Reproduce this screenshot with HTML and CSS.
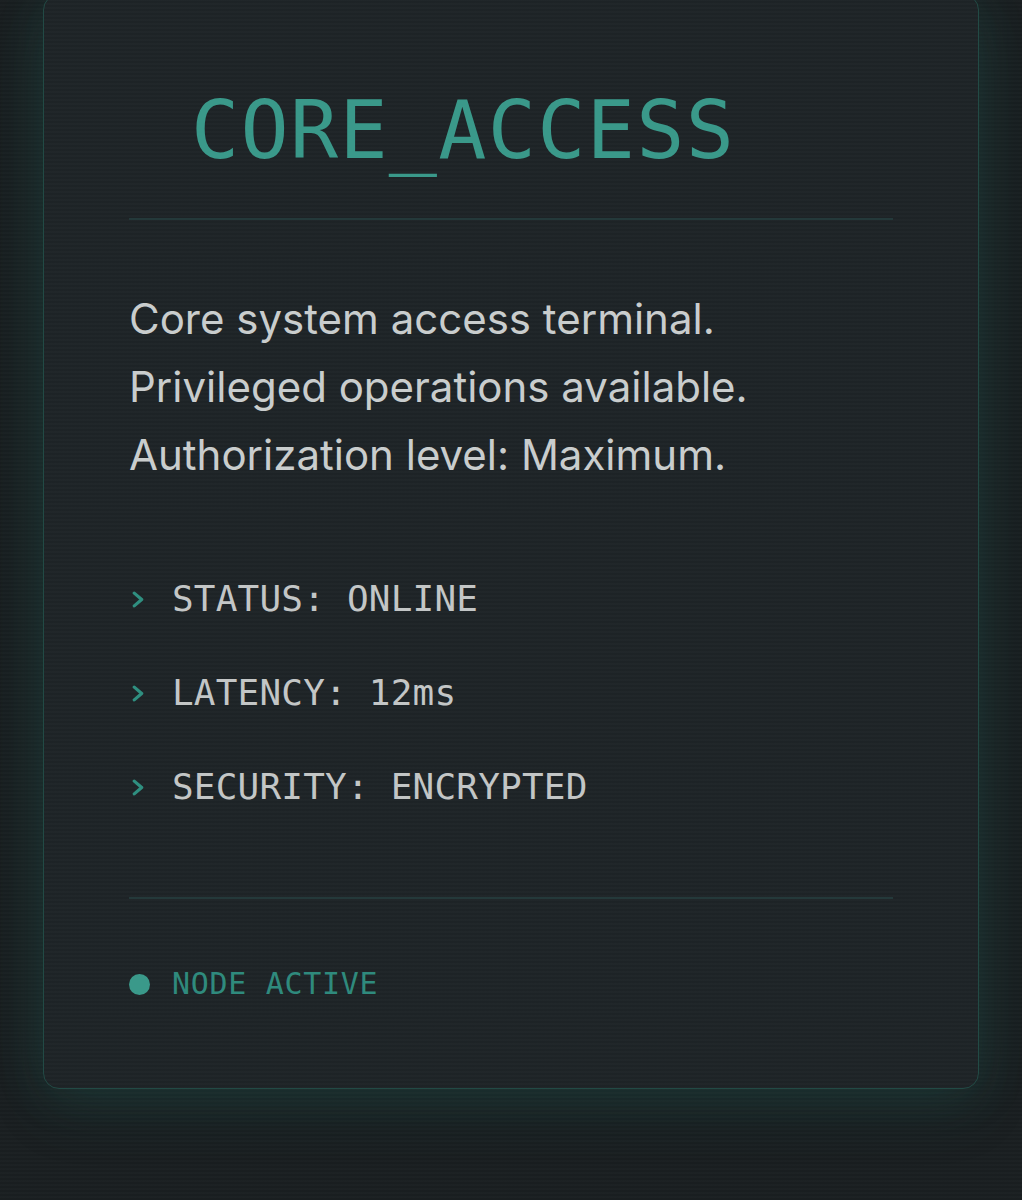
FILE: index.html
```html
<!DOCTYPE html>
<html lang="en">
<head>
<meta charset="utf-8">
<title>CORE_ACCESS</title>
<link rel="stylesheet" href="styles.css">
</head>
<body>
<main class="page">
  <section class="card">
    <h1 class="title">CORE_ACCESS</h1>
    <hr class="rule">
    <p class="desc">Core system access terminal.<br>Privileged operations available.<br>Authorization level: Maximum.</p>
    <ul class="stats">
      <li class="stat"><svg class="chev" viewBox="0 0 14 16" aria-hidden="true"><polyline points="3,2 10,8 3,14"/></svg>STATUS: ONLINE</li>
      <li class="stat"><svg class="chev" viewBox="0 0 14 16" aria-hidden="true"><polyline points="3,2 10,8 3,14"/></svg>LATENCY: 12ms</li>
      <li class="stat"><svg class="chev" viewBox="0 0 14 16" aria-hidden="true"><polyline points="3,2 10,8 3,14"/></svg>SECURITY: ENCRYPTED</li>
    </ul>
    <hr class="rule">
    <div class="node"><span class="dot"></span>NODE ACTIVE</div>
  </section>
</main>
</body>
</html>
```
FILE: styles.css
```css
html, body {
  margin: 0;
  padding: 0;
}
body {
  background-color: #1a1f21;
  background-image: repeating-linear-gradient(to bottom, rgba(255,255,255,0.012) 0, rgba(255,255,255,0.012) 2px, rgba(0,0,0,0.03) 2px, rgba(0,0,0,0.03) 4px);
  min-height: 1200px;
  overflow: hidden;
}
.page {
  padding: 0 43px 110px;
}
.card {
  margin-top: -6px;
  background-color: #1e2427;
  background-image: repeating-linear-gradient(to bottom, rgba(255,255,255,0.01) 0, rgba(255,255,255,0.01) 2px, rgba(0,0,0,0.025) 2px, rgba(0,0,0,0.025) 4px);
  border: 1.5px solid #224a45;
  border-radius: 16px;
  padding: 0 85px 87px;
  box-shadow: 0 0 50px rgba(40, 140, 120, 0.18), 0 24px 60px rgba(30, 110, 95, 0.12);
}
.title {
  margin: 0;
  padding: 96px 0 47px 62px;
  font-family: "DejaVu Sans Mono", "Liberation Mono", monospace;
  font-weight: 400;
  font-size: 80px;
  line-height: 1;
  letter-spacing: 1.3px;
  color: #3a998a;
}
.rule {
  margin: 0;
  border: 0;
  height: 2px;
  background: #24393a;
}
.desc {
  margin: 65px 0 0;
  font-family: Inter, "Noto Sans", sans-serif;
  font-size: 42px;
  line-height: 68px;
  color: #c9cdcd;
}
.stats {
  list-style: none;
  margin: 89px 0 89px;
  padding: 0;
  display: flex;
  flex-direction: column;
  gap: 52px;
}
.stat {
  font-family: "DejaVu Sans Mono", "Liberation Mono", monospace;
  font-size: 36px;
  line-height: 42px;
  color: #c3c6c6;
  letter-spacing: 0.2px;
  display: flex;
  align-items: center;
}
.chev {
  width: 15px;
  height: 17px;
  margin: 0 26px 0 2px;
  flex: none;
  fill: none;
  stroke: #2f8f80;
  stroke-width: 3;
  stroke-linecap: round;
  stroke-linejoin: round;
}
.node {
  margin-top: 68px;
  display: flex;
  align-items: center;
  font-family: "DejaVu Sans Mono", "Liberation Mono", monospace;
  font-size: 30px;
  line-height: 34px;
  letter-spacing: 0.7px;
  color: #2f8a7d;
}
.dot {
  width: 21px;
  height: 21px;
  border-radius: 50%;
  background: #3a998a;
  margin-right: 22px;
  flex: none;
}
```
